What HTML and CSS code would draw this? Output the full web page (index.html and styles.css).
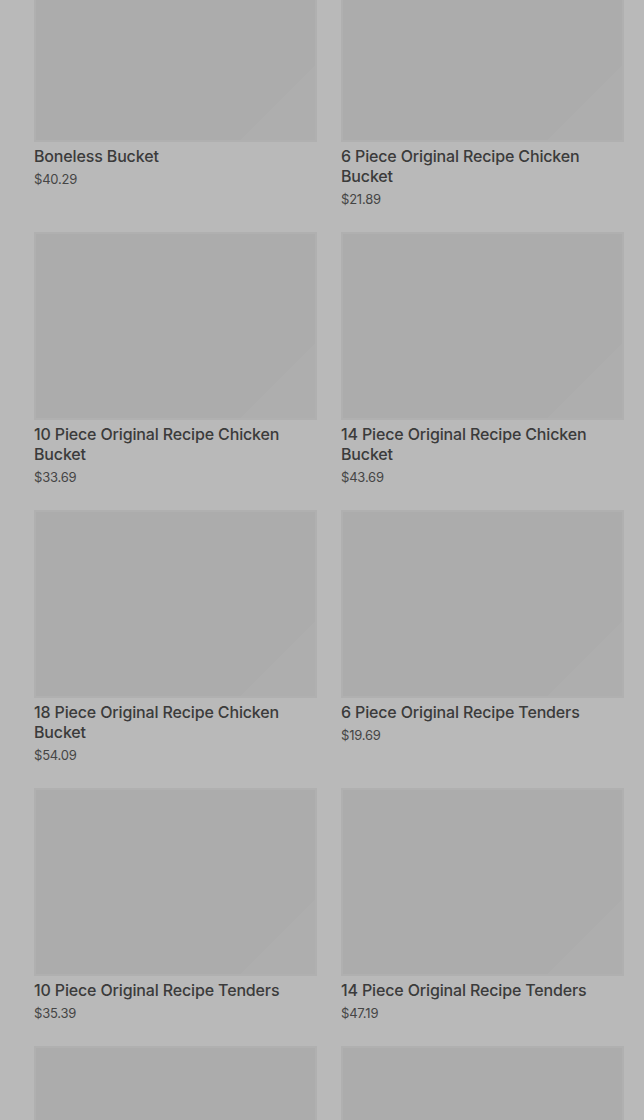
FILE: index.html
```html
<!DOCTYPE html>
<html lang="en">
<head>
    <meta charset="UTF-8">
    <meta name="viewport" content="width=device-width, initial-scale=1.0">
    <title>Buckets</title>
    <link rel="stylesheet" href="styles.css">
</head>
<body>
    <div class="overlay-page">
        <div class="grid" id="product-grid">
            <!-- Products inserted by script -->
        </div>
    </div>

    <script>
        const products = [
            { name: 'Boneless Bucket', price: '$40.29' },
            { name: '6 Piece Original Recipe Chicken Bucket', price: '$21.89' },
            { name: '10 Piece Original Recipe Chicken Bucket', price: '$33.69' },
            { name: '14 Piece Original Recipe Chicken Bucket', price: '$43.69' },
            { name: '18 Piece Original Recipe Chicken Bucket', price: '$54.09' },
            { name: '6 Piece Original Recipe Tenders', price: '$19.69' },
            { name: '10 Piece Original Recipe Tenders', price: '$35.39' },
            { name: '14 Piece Original Recipe Tenders', price: '$47.19' },
            { name: '', price: '' },
            { name: '', price: '' }
        ];

        function createProduct(p) {
            return `
                <div class="product">
                    <div class="product-image"></div>
                    <div class="product-name">${p.name}</div>
                    <div class="product-price">${p.price}</div>
                </div>
            `;
        }

        document.getElementById('product-grid').innerHTML = products.map(createProduct).join('');
    </script>
</body>
</html>
```

FILE: styles.css
```css
html, body {
    margin: 0;
    padding: 0;
    background: #b9b9b9;
    overflow: hidden;
}
body {
    font-family: 'Inter', 'Roboto', sans-serif;
    color: #3a3a3a;
}
.overlay-page {
    padding: 0 20px 0 34px;
    margin-top: -46px;
}
.grid {
    display: grid;
    grid-template-columns: 283px 283px;
    column-gap: 24px;
    row-gap: 24px;
}
.product-image {
    height: 188px;
    box-sizing: border-box;
    border: 2px solid #b0b0b0;
    background: linear-gradient(135deg, #acacac 0%, #acacac 84%, #aeaeae 84%, #aeaeae 100%);
}
.product-name {
    margin-top: 4px;
    font-size: 16px;
    font-weight: 500;
    line-height: 20px;
    color: #3b3b3b;
    letter-spacing: -0.15px;
}
.product-price {
    margin-top: 4px;
    font-size: 13px;
    line-height: 18px;
    color: #454545;
    letter-spacing: -0.2px;
}
```
